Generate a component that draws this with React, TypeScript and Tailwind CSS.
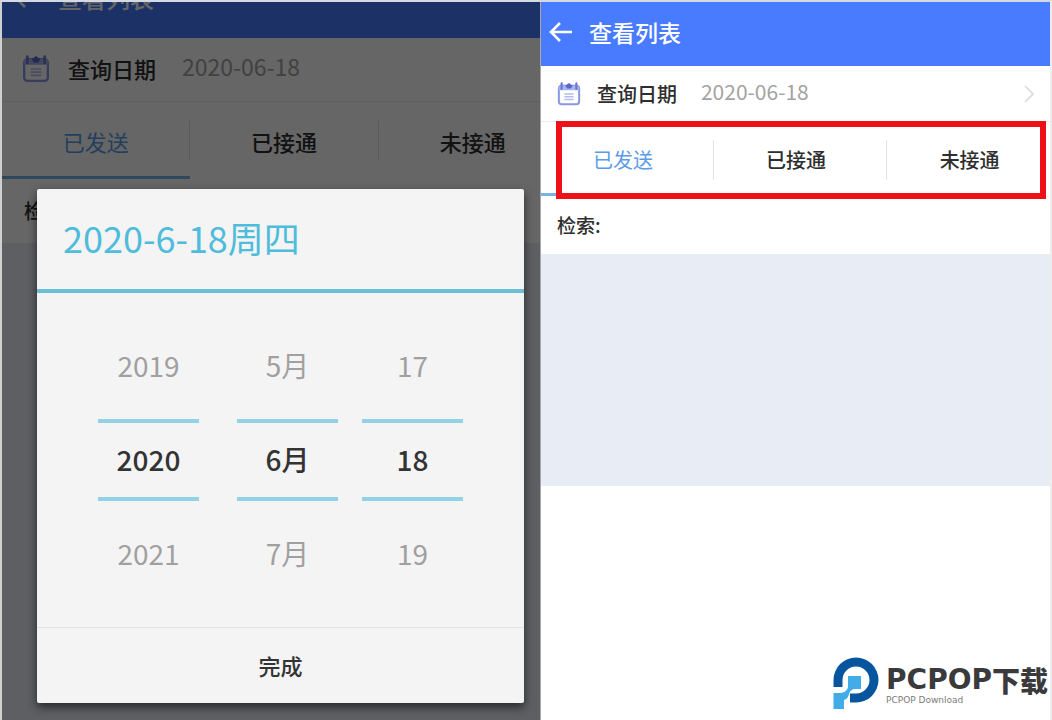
import { useState } from "react";
import type { ReactNode } from "react";
import { clsx } from "clsx";

const TABS = ["已发送", "已接通", "未接通"];

function CalendarIcon({ className }: { className: string }) {
  return (
    <svg viewBox="0 0 26 26" fill="none" className={className} aria-hidden="true">
      <rect x="2" y="4" width="22" height="20" rx="3" stroke="#8b98e0" strokeWidth="2.2" />
      <path d="M2 9V6a2 2 0 0 1 2-2h18a2 2 0 0 1 2 2v3z" fill="#a9b3ec" />
      <path d="M5 1.500v6M21 1.500v6" stroke="#6a77d6" strokeWidth="2.4" strokeLinecap="round" />
      <path d="M13 1l4 3-2 3h-4l-2-3z" fill="#5a67cf" />
      <path d="M8 13h10M8 16h10M8 19h10" stroke="#b4bdee" strokeWidth="1.6" />
    </svg>
  );
}

function BackIcon() {
  return (
    <svg viewBox="0 0 24 24" fill="none" className="size-6 shrink-0" aria-hidden="true">
      <path d="M23 12H2M11 3L2 12l9 9" stroke="#ffffff" strokeWidth="2.6" />
    </svg>
  );
}

interface ScreenProps {
  large?: boolean;
  children?: ReactNode;
}

function CallListScreen({ large = false, children }: ScreenProps) {
  const [tab, setTab] = useState(0);
  const searchId = large ? "search-large" : "search";
  return (
    <section className="relative flex min-w-0 flex-col overflow-hidden bg-white text-[#2e2e2e]">
      <header
        className={clsx(
          "flex shrink-0 bg-[#487bff] text-white",
          large ? "h-9 items-end gap-5 pb-7 pl-3" : "h-16 items-center gap-4 pb-1 pl-2",
        )}
      >
        <button type="button" aria-label="返回" className="flex">
          <BackIcon />
        </button>
        <h1 className={clsx("font-medium", large ? "text-2xl leading-6" : "text-[23px] leading-6")}>
          查看列表
        </h1>
      </header>

      <button
        type="button"
        className={clsx(
          "flex shrink-0 items-center border-b border-[#ececec] text-left",
          large ? "h-16 gap-[18px] pb-0.5 pl-5" : "h-14 gap-4 px-4",
        )}
      >
        <CalendarIcon className={large ? "size-7 shrink-0" : "size-6 shrink-0"} />
        <span className={clsx("font-medium", large ? "text-[22px]" : "text-xl")}>查询日期</span>
        <span
          className={clsx("pb-1 pl-2 text-[#a3a3a3]", large ? "text-[23px]" : "text-[21px]")}
        >
          2020-06-18
        </span>
        {!large && (
          <svg viewBox="0 0 10 18" fill="none" className="ml-auto h-[18px] w-[10px]" aria-hidden="true">
            <path d="M1 1l8 8-8 8" stroke="#d6d9de" strokeWidth="1.6" />
          </svg>
        )}
      </button>

      <div role="tablist" className={clsx("flex shrink-0", large ? "h-[77px]" : "h-[74px]")}>
        {TABS.map((name, i) => (
          <button
            key={name}
            type="button"
            role="tab"
            aria-selected={tab === i}
            onClick={() => setTab(i)}
            className={clsx(
              "flex shrink-0 items-center border-b-3 pt-1",
              large ? "w-[35%] text-[22px]" : "w-[34%] text-xl",
              tab === i ? "border-[#79b3e6] text-[#5b9bea]" : "border-transparent font-medium",
            )}
          >
            <span
              className={clsx(
                "flex h-10 flex-1 items-center justify-center",
                !large && "pr-2",
                i < 2 && "border-r border-[#e0e0e0]",
              )}
            >
              {name}
            </span>
          </button>
        ))}
      </div>

      <div
        className={clsx(
          "flex shrink-0 items-center",
          large ? "h-16 pl-[22px] text-xl" : "h-[58px] gap-2 pl-4 text-[19px]",
        )}
      >
        <label htmlFor={searchId} className="font-medium">
          检索:
        </label>
        <input id={searchId} type="text" className="min-w-0 flex-1 bg-transparent outline-none" />
      </div>

      <div className={clsx("bg-[#e8edf5]", large ? "flex-1" : "h-[232px] shrink-0")} />
      {children}
    </section>
  );
}

function PickerColumn({ label, values }: { label: string; values: string[] }) {
  return (
    <div role="listbox" aria-label={label} className="flex w-[101px] flex-col gap-3">
      {values.map((value, i) => (
        <button
          key={value}
          type="button"
          role="option"
          aria-selected={i === 1}
          className={clsx(
            "h-[82px] border-y-4 pb-0.5 text-[28px]",
            i === 1
              ? "border-[#93d2e4] font-medium text-[#333333]"
              : "border-transparent text-[#a0a0a0]",
          )}
        >
          {value}
        </button>
      ))}
    </div>
  );
}

function DateDialog() {
  return (
    <div className="absolute inset-0 bg-black/60">
      <div
        role="dialog"
        aria-label="选择日期"
        className="absolute top-[187px] right-4 left-[35px] rounded-xs bg-[#f4f4f4] shadow-[0_4px_10px_rgba(0,0,0,0.6)]"
      >
        <h2 className="flex h-[104px] items-center border-b-4 border-[#6bc0d8] pb-1 pl-[26px] text-4xl text-[#4fbcdb]">
          2020-6-18周四
        </h2>
        <div className="flex pt-8 pb-8 pl-[61px]">
          <PickerColumn label="年" values={["2019", "2020", "2021"]} />
          <div className="flex gap-6 pl-[38px]">
            <PickerColumn label="月" values={["5月", "6月", "7月"]} />
            <PickerColumn label="日" values={["17", "18", "19"]} />
          </div>
        </div>
        <button
          type="button"
          className="h-19 w-full border-t border-[#e2e2e2] text-[22px] font-medium text-[#333333]"
        >
          完成
        </button>
      </div>
    </div>
  );
}

function BrandMark() {
  return (
    <div className="absolute right-0.5 bottom-2.5 flex items-center gap-1.5">
      <svg viewBox="0 0 47 53" className="h-[53px] w-[47px]" aria-hidden="true">
        <path
          d="M0.500 30V23A22.500 22.500 0 1 1 23 45.500H17V36.500H23A13.500 13.500 0 1 0 9.500 23V30z"
          fill="#07559f"
        />
        <path d="M15 19h13v13h-7q-4 1-5 5-1 5-5 6v9H0.500V36H8q6-1 7-6z" fill="#41ace8" />
      </svg>
      <div className="flex flex-col pt-1">
        <div className="flex items-center text-[28px] leading-7 font-black whitespace-nowrap text-[#3a3a3c]">
          <span className="font-['DejaVu_Sans',sans-serif]">PCPOP</span>
          <span>下载</span>
        </div>
        <span className="font-['DejaVu_Sans',sans-serif] text-[9px] leading-3 text-[#7a7a7a]">
          PCPOP Download
        </span>
      </div>
    </div>
  );
}

export default function App() {
  return (
    <main className="relative grid min-h-screen grid-cols-[540fr_512fr] border-t-2 border-r-2 border-l-2 border-t-[#d5d9e4] border-r-[#ededed] border-l-[#d0d0d0] bg-white font-['Noto_Sans_CJK_SC',sans-serif]">
      <CallListScreen large>
        <DateDialog />
      </CallListScreen>
      <div className="relative flex flex-col border-l border-[#a8a8a8]">
        <CallListScreen />
        <div className="pointer-events-none absolute top-[119px] right-1 left-[15px] h-[78px] border-6 border-[#ee1016]" />
      </div>
      <BrandMark />
    </main>
  );
}
